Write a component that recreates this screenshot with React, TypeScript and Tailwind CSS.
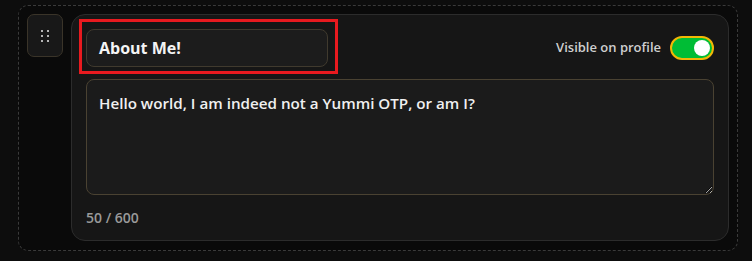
import React from "react";

export default function App() {
  return (
    <div
      className="w-[752px] h-[261px] bg-[#0d0d0d] pl-[18px] pt-[5px]"
      style={{ fontFamily: "'Open Sans', 'Noto Sans', sans-serif" }}
    >
      <div className="w-[720px] h-[246px] rounded-[10px] border border-dashed border-[#3a3a3a] bg-[#0a0a0a] pl-[8px] pt-[8px] flex gap-[8px]">
        <div className="w-[36px] h-[43px] rounded-[7px] border border-[#3a3429] bg-[#181818] flex items-center justify-center">
          <div className="grid grid-cols-2 gap-x-[4px] gap-y-[3px]">
            {Array.from({ length: 6 }).map((_, i) => (
              <span key={i} className="block w-[2px] h-[2px] rounded-full bg-[#e8e8e8]" />
            ))}
          </div>
        </div>
        <div className="w-[658px] h-[227px] rounded-[14px] border border-[#2c2c2c] bg-[#161616] px-[14px] pt-[14px] flex flex-col">
          <div className="flex items-center justify-between">
            <div className="relative">
              <div className="w-[242px] h-[38px] rounded-[8px] border border-[#403a2e] bg-[#1c1c1c] flex items-center pl-[12px] text-[16px] font-bold text-[#f4f4f4]">
                About Me!
              </div>
              <div className="absolute left-[-7px] top-[-10px] w-[259px] h-[55px] border-[3px] border-[#e81a1f] pointer-events-none" />
            </div>
            <div className="flex items-center gap-[9px]">
              <span className="text-[13px] text-[#cfcfcf] font-semibold">Visible on profile</span>
              <div className="w-[44px] h-[24px] rounded-full bg-[#00bd35] border-2 border-[#f2b705] flex items-center justify-end pr-[2px]">
                <span className="block w-[16px] h-[16px] rounded-full bg-white" />
              </div>
            </div>
          </div>
          <textarea
            className="mt-[12px] w-[628px] h-[116px] rounded-[8px] border border-[#4a4232] bg-[#1b1b1b] px-[12px] py-[12px] text-[15.2px] font-semibold text-[#f0f0f0] outline-none"
            defaultValue="Hello world, I am indeed not a Yummi OTP, or am I?"
            style={{ fontFamily: "'Open Sans', 'Noto Sans', sans-serif" }}
          />
          <div className="mt-[12px] text-[14px] font-semibold text-[#9a9a9a]">50 / 600</div>
        </div>
      </div>
    </div>
  );
}
